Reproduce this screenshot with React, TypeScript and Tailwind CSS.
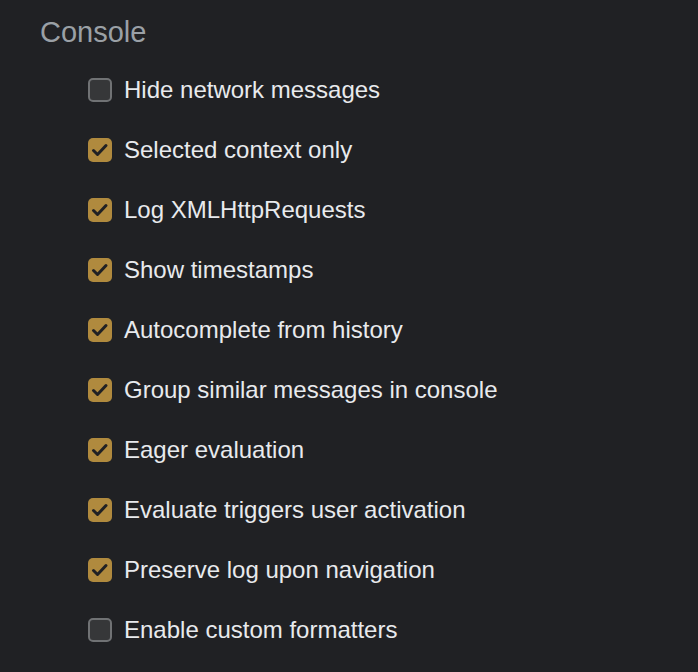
const options: { label: string; checked: boolean }[] = [
  { label: "Hide network messages", checked: false },
  { label: "Selected context only", checked: true },
  { label: "Log XMLHttpRequests", checked: true },
  { label: "Show timestamps", checked: true },
  { label: "Autocomplete from history", checked: true },
  { label: "Group similar messages in console", checked: true },
  { label: "Eager evaluation", checked: true },
  { label: "Evaluate triggers user activation", checked: true },
  { label: "Preserve log upon navigation", checked: true },
  { label: "Enable custom formatters", checked: false },
]

function Checkbox({ checked }: { checked: boolean }) {
  if (!checked) {
    return <div className="w-6 h-6 shrink-0 rounded-[5px] border-2 border-[#707274] bg-[#363739]"></div>
  }
  return (
    <div className="w-6 h-6 shrink-0 rounded-[5px] bg-[#b08a3e] flex items-center justify-center">
      <svg width="24" height="24" viewBox="0 0 24 24" fill="none">
        <path d="M5.5 12.5l4 4 8.5-9" stroke="#202124" strokeWidth="3" strokeLinecap="round" strokeLinejoin="round" />
      </svg>
    </div>
  )
}

export default function App() {
  return (
    <div className="w-[698px] h-[672px] bg-[#202124] pt-[14px] overflow-hidden" style={{ fontFamily: '"Liberation Sans", Arial, sans-serif' }}>
      <h1 className="pl-10 text-[29px] leading-[36px] text-[#9aa0a6]">Console</h1>
      <div className="mt-[10px]">
        {options.map((o) => (
          <label key={o.label} className="h-[60px] pl-[88px] flex items-center gap-3">
            <Checkbox checked={o.checked} />
            <span className="text-[24px] text-[#e8eaed]">{o.label}</span>
          </label>
        ))}
      </div>
    </div>
  )
}
